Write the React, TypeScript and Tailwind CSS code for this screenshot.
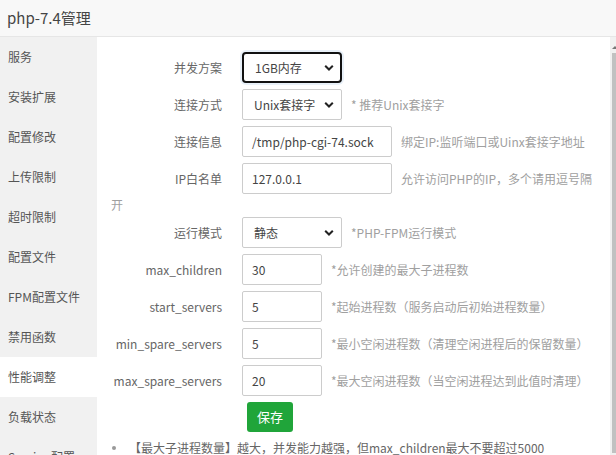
import type { ReactNode } from 'react'

const FONT = '"Noto Sans CJK SC", "Noto Sans", sans-serif'

const menu = ['服务', '安装扩展', '配置修改', '上传限制', '超时限制', '配置文件', 'FPM配置文件', '禁用函数', '性能调整', '负载状态', 'Session配置']

function Chevron() {
  return (
    <svg width="10" height="7" viewBox="0 0 10 7" className="absolute right-[8px] top-1/2 -translate-y-1/2">
      <polyline points="1.2,1.2 5,5 8.8,1.2" fill="none" stroke="#222" strokeWidth="2" />
    </svg>
  )
}

function Select({ value, focused }: { value: string; focused?: boolean }) {
  return (
    <span className="relative inline-block align-middle">
      <span
        className={`flex h-[31px] w-[100px] items-center pl-[11px] text-[12px] text-[#444] bg-white ${
          focused ? 'border-2 border-[#111] rounded-[4px] pl-[10px] shadow-[0_0_0_2px_#e8f0f8]' : 'border border-[#ccc] rounded-[2px]'
        }`}
      >
        {value}
      </span>
      <Chevron />
    </span>
  )
}

function Input({ value, w }: { value: string; w: string }) {
  return (
    <span className={`inline-flex h-[31px] ${w} items-center align-middle border border-[#ccc] rounded-[2px] pl-[9px] text-[12px] text-[#444] bg-white`}>
      {value}
    </span>
  )
}

// h is fixed so rows step by 37px; the IP row is taller because its hint wraps
function Row({ label, children, help, h = 'h-[31px]' }: { label: string; children: ReactNode; help?: string; h?: string }) {
  return (
    <div className={`${h} mb-[6px] leading-[18px] text-[12px]`}>
      <span className="inline-block w-[111px] mr-[20px] text-right align-middle text-[#666]">{label}</span>
      {children}
      {help && <span className="ml-[9px] align-middle text-[#a0a0a0]">{help}</span>}
    </div>
  )
}

export default function App() {
  return (
    <div className="flex h-[455px] w-[616px] flex-col overflow-hidden bg-white" style={{ fontFamily: FONT }}>
      <div className="flex h-[37px] shrink-0 items-center border-b border-[#e6e6e6] bg-[#f8f8f8] pl-[7px] text-[15px] text-[#444]">
        php-7.4管理
      </div>
      <div className="flex min-h-0 flex-1">
        <div className="w-[97px] shrink-0 bg-[#f1f1f1]">
          {menu.map((m) => (
            <div
              key={m}
              className={`flex h-[40px] items-center pl-[8px] text-[12px] text-[#555] ${m === '性能调整' ? 'bg-white' : ''}`}
            >
              {m}
            </div>
          ))}
        </div>

        <div className="min-w-0 flex-1 pl-[14px] pr-[10px] pt-[15px]">
          <Row label="并发方案">
            <Select value="1GB内存" focused />
          </Row>
          <Row label="连接方式" help="* 推荐Unix套接字">
            <Select value="Unix套接字" />
          </Row>
          <Row label="连接信息" help="绑定IP:监听端口或Uinx套接字地址">
            <Input value="/tmp/php-cgi-74.sock" w="w-[150px]" />
          </Row>
          <Row label="IP白名单" help="允许访问PHP的IP，多个请用逗号隔开" h="h-[48px]">
            <Input value="127.0.0.1" w="w-[150px]" />
          </Row>
          <Row label="运行模式" help="*PHP-FPM运行模式">
            <Select value="静态" />
          </Row>
          <Row label="max_children" help="*允许创建的最大子进程数">
            <Input value="30" w="w-[80px]" />
          </Row>
          <Row label="start_servers" help="*起始进程数（服务启动后初始进程数量）">
            <Input value="5" w="w-[80px]" />
          </Row>
          <Row label="min_spare_servers" help="*最小空闲进程数（清理空闲进程后的保留数量）">
            <Input value="5" w="w-[80px]" />
          </Row>
          <Row label="max_spare_servers" help="*最大空闲进程数（当空闲进程达到此值时清理）">
            <Input value="20" w="w-[80px]" />
          </Row>
          <button className="ml-[136px] flex h-[30px] w-[46px] items-center justify-center rounded-[3px] bg-[#20a53a] text-[13px] text-white">
            保存
          </button>
          <div className="mt-[8px] flex items-center whitespace-nowrap text-[12px] leading-[16px] text-[#666]">
            <span className="ml-[1px] mr-[13px] h-[4px] w-[4px] shrink-0 rounded-full bg-[#999]" />
            <span>【最大子进程数量】越大，并发能力越强，但max_children最大不要超过5000</span>
          </div>
        </div>

        <div className="relative w-[6px] shrink-0 bg-[#f1f1f1]">
          <div className="ml-[2px] mt-[9px] h-0 w-0 border-x-[3px] border-b-[3px] border-x-transparent border-b-[#777]" />
          <div className="ml-[2px] mt-[4px] h-[400px] bg-[#c1c1c1]" />
        </div>
      </div>
    </div>
  )
}
